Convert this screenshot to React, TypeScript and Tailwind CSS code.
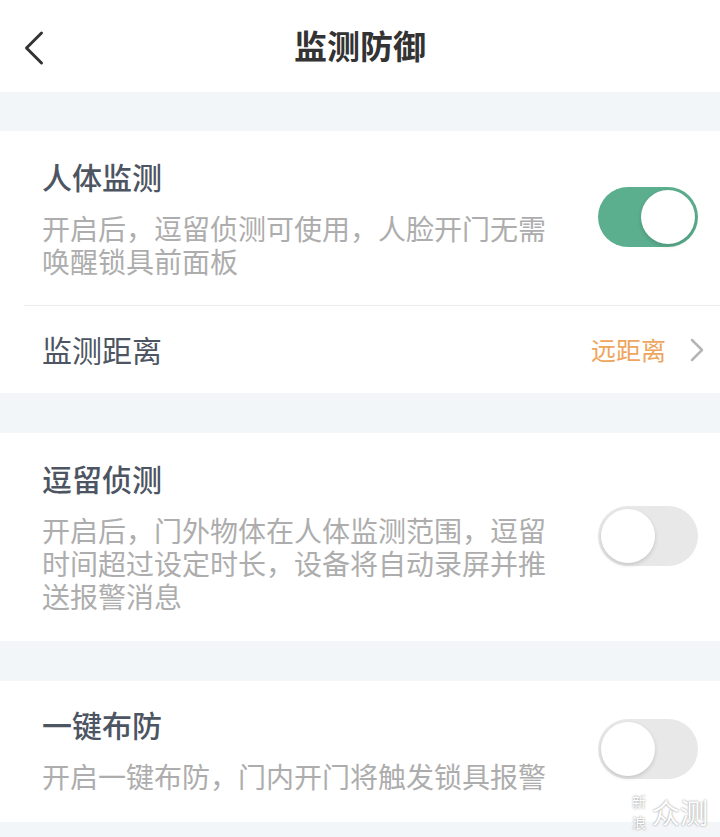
import { ChevronLeft, ChevronRight } from "lucide-react";

const font = { fontFamily: '"Noto Sans CJK SC", "Noto Sans", sans-serif' };

function Toggle({ on }: { on: boolean }) {
    return (
        <div className={`relative w-[100px] h-[60px] rounded-full shrink-0 ${on ? 'bg-[#5bae8e]' : 'bg-[#e8e8e8]'}`}>
            <div className={`absolute top-[3px] w-[54px] h-[54px] rounded-full bg-white shadow-[0_2px_4px_rgba(0,0,0,0.15)] ${on ? 'right-[3px]' : 'left-[3px]'}`} />
        </div>
    );
}

function SwitchRow({ title, desc, on, className }: { title: string; desc: string; on: boolean; className: string }) {
    return (
        <div className={`flex items-center justify-between pl-[42px] pr-[22px] ${className}`}>
            <div className="w-[510px]">
                <p className="text-[30px] leading-[40px] font-medium text-[#4d5562]">{title}</p>
                <p className="mt-[16px] text-[28px] leading-[33px] text-[#adadad]">{desc}</p>
            </div>
            <Toggle on={on} />
        </div>
    );
}

export default function App() {
    return (
        <div className="relative w-[720px] h-[837px] bg-[#f3f6f8] overflow-hidden" style={font}>
            <header className="relative flex items-center justify-center h-[92px] bg-white">
                <ChevronLeft className="absolute left-[4px] top-[18px] w-[60px] h-[60px] text-[#333]" strokeWidth={1.2} />
                <h1 className="text-[33px] font-bold text-[#333]">监测防御</h1>
            </header>

            <section className="mt-[39px] bg-white">
                <SwitchRow
                    title="人体监测"
                    desc="开启后，逗留侦测可使用，人脸开门无需唤醒锁具前面板"
                    on={true}
                    className="pt-[25px] pb-[27px]"
                />
                <div className="ml-[24px] h-px bg-[#ececec]" />
                <div className="flex items-center justify-between h-[87px] pl-[42px] pr-[3px]">
                    <span className="text-[30px] text-[#4d5562]">监测距离</span>
                    <div className="flex items-center gap-[11px]">
                        <span className="text-[25px] text-[#eea55d]">远距离</span>
                        <ChevronRight className="w-[40px] h-[40px] text-[#b5b5b5]" strokeWidth={1.5} />
                    </div>
                </div>
            </section>

            <section className="mt-[40px] bg-white">
                <SwitchRow
                    title="逗留侦测"
                    desc="开启后，门外物体在人体监测范围，逗留时间超过设定时长，设备将自动录屏并推送报警消息"
                    on={false}
                    className="pt-[25px] pb-[28px]"
                />
            </section>

            <section className="mt-[40px] bg-white">
                <SwitchRow
                    title="一键布防"
                    desc="开启一键布防，门内开门将触发锁具报警"
                    on={false}
                    className="pt-[23px] pb-[29px]"
                />
            </section>

            <div className="absolute right-[12px] bottom-[4px] flex items-center gap-[6px] text-white [text-shadow:0_0_2px_rgba(0,0,0,0.5)]">
                <div className="flex flex-col text-[14px] leading-[21px]">
                    <span>新</span>
                    <span>浪</span>
                </div>
                <span className="text-[28px] leading-none">众测</span>
            </div>
        </div>
    );
}
